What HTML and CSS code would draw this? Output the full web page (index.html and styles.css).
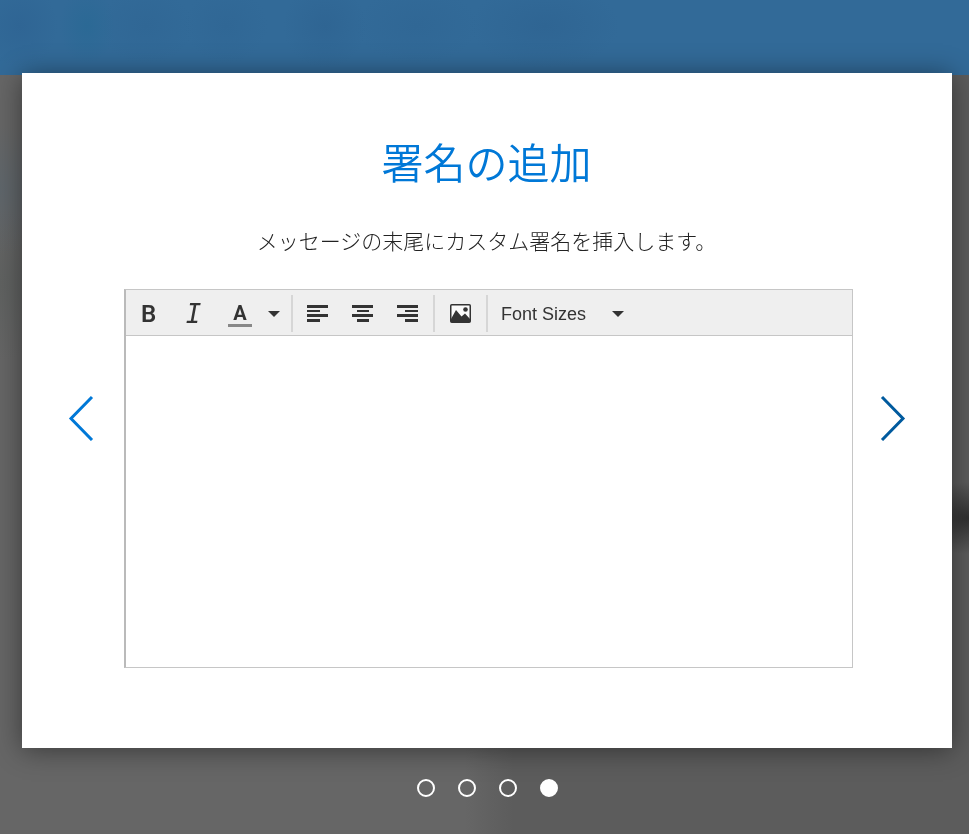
FILE: index.html
```html
<!DOCTYPE html>
<html lang="ja">
<head>
<meta charset="utf-8">
<meta name="viewport" content="width=device-width, initial-scale=1">
<title>署名の追加</title>
<link rel="stylesheet" href="styles.css">
</head>
<body>
<div class="backdrop" aria-hidden="true">
  <div class="backdrop-header"></div>
  <div class="backdrop-body"></div>
</div>
<main class="tour">
  <section class="dialog" role="dialog" aria-labelledby="title">
    <button class="nav nav-prev" type="button" aria-label="前へ">
      <svg width="26" height="46" viewBox="0 0 26 46"><path d="M24 2 3 23.500 24 45"/></svg>
    </button>
    <div class="content">
      <h1 id="title">署名の追加</h1>
      <p class="lead">メッセージの末尾にカスタム署名を挿入します。</p>
      <div class="editor">
        <div class="toolbar" role="toolbar">
          <div class="group">
            <button class="tool bold" type="button" aria-label="太字">B</button>
            <button class="tool italic" type="button" aria-label="斜体">I</button>
            <button class="tool color" type="button" aria-label="文字の色"><span>A</span></button>
            <button class="tool more" type="button" aria-label="色の選択">
              <svg class="caret" width="12" height="6" viewBox="0 0 12 6"><path d="M0 0h12L6 6z"/></svg>
            </button>
          </div>
          <div class="group">
            <button class="tool" type="button" aria-label="左揃え">
              <svg width="21" height="17" viewBox="0 0 21 17"><path d="M0 0h21v3H0zM0 5h13v2H0zM0 9h21v3H0zM0 14h13v3H0z"/></svg>
            </button>
            <button class="tool" type="button" aria-label="中央揃え">
              <svg width="21" height="17" viewBox="0 0 21 17"><path d="M0 0h21v3H0zM5 5h12v2H5zM0 9h21v3H0zM5 14h12v3H5z"/></svg>
            </button>
            <button class="tool" type="button" aria-label="右揃え">
              <svg width="21" height="17" viewBox="0 0 21 17"><path d="M0 0h21v3H0zM8 5h13v2H8zM0 9h21v3H0zM8 14h13v3H8z"/></svg>
            </button>
          </div>
          <div class="group">
            <button class="tool" type="button" aria-label="画像">
              <svg width="21" height="19" viewBox="0 0 21 19"><rect class="frame" x="0.750" y="0.750" width="19.500" height="17.500" rx="1"/><circle cx="15.500" cy="5.500" r="2.300"/><path d="M1 18v-3L6 6l5.500 6.500 3.500-3 5 5.500v3z"/></svg>
            </button>
          </div>
          <label class="size">
            <select aria-label="Font Sizes"><option>Font Sizes</option></select>
            <svg class="caret" width="12" height="6" viewBox="0 0 12 6"><path d="M0 0h12L6 6z"/></svg>
          </label>
        </div>
        <textarea aria-label="署名"></textarea>
      </div>
    </div>
    <button class="nav nav-next" type="button" aria-label="次へ">
      <svg width="26" height="46" viewBox="0 0 26 46"><path d="M2 2 23 23.500 2 45"/></svg>
    </button>
  </section>
  <div class="dots">
    <input type="radio" name="step" aria-label="1">
    <input type="radio" name="step" aria-label="2">
    <input type="radio" name="step" aria-label="3">
    <input type="radio" name="step" aria-label="4" checked>
  </div>
</main>
</body>
</html>
```
FILE: styles.css
```css
* {
  box-sizing: border-box;
}

body {
  margin: 0;
  background: #666;
  color: #333;
  font-family: "Liberation Sans", "Noto Sans CJK JP", sans-serif;
}

button,
select,
textarea,
input {
  margin: 0;
  padding: 0;
  border: 0;
  background: none;
  color: inherit;
  font: inherit;
}

svg {
  display: block;
  fill: currentColor;
}

/* Dimmed page behind the dialog */
.backdrop {
  position: fixed;
  inset: 0;
  z-index: -1;
  display: flex;
  flex-direction: column;
}

.backdrop-header {
  height: 75px;
  background:
    radial-gradient(38px 42px at 20px 26px, #2f6594, transparent),
    radial-gradient(28px 38px at 87px 26px, #2b6995, transparent),
    radial-gradient(48px 38px at 146px 26px, #306795, transparent),
    radial-gradient(42px 38px at 226px 26px, #306795, transparent),
    radial-gradient(42px 42px at 325px 26px, #2f6593, transparent),
    radial-gradient(62px 38px at 417px 26px, #306795, transparent),
    radial-gradient(75px 42px at 545px 26px, #2f6593, transparent),
    #326a98;
}

.backdrop-body {
  flex: 1;
  background:
    radial-gradient(60px 36px at 100% 443px, #303030, transparent),
    radial-gradient(60px 65px at 0 115px, #5f666b, transparent),
    radial-gradient(70px 75px at 0 210px, #606261, transparent),
    linear-gradient(90deg, #666 48%, #5c5c5c 53%);
}

.tour {
  padding: 73px 17px 37px 22px;
}

.dialog {
  display: grid;
  grid-template-columns: 102px 1fr 99px;
  background: #fff;
  box-shadow: 0 2px 26px rgba(0, 0, 0, 0.45);
}

.content {
  padding: 56px 0 80px;
}

h1,
.lead {
  margin: 0;
  padding-right: 4px;
  font-family: "Noto Sans CJK JP", sans-serif;
  text-align: center;
}

h1 {
  color: #0078d7;
  font-size: 42px;
  font-weight: 350;
  line-height: 64px;
}

.lead {
  margin: 32px 0 34px;
  color: #222;
  font-size: 21px;
  font-weight: 300;
  line-height: 30px;
}

.nav {
  display: grid;
  place-items: center;
  padding-top: 14px;
  cursor: pointer;
}

.nav svg {
  fill: none;
  stroke: currentColor;
  stroke-width: 3;
}

.nav-prev {
  padding-left: 16px;
  color: #0078d7;
}

.nav-next {
  padding-right: 20px;
  color: #005a9e;
}

.editor {
  border: 1px solid #c6c6c6;
  border-left: 2px solid #bababa;
}

.toolbar {
  display: flex;
  height: 46px;
  border-bottom: 1px solid #c6c6c6;
  background: #efefef;
}

.group {
  display: flex;
  align-items: center;
  margin: 5px 0 3px;
  padding: 0 3px;
  border-right: 2px solid #d6d6d6;
}

.group:first-child {
  padding: 0 7px 0 0;
}

.group:nth-child(2) {
  padding: 0 3px 0 2px;
}

.tool {
  display: grid;
  place-items: center;
  width: 45px;
  height: 37px;
}

.tool .frame {
  fill: #fafafa;
  stroke: currentColor;
  stroke-width: 1.5px;
}

.bold {
  font-family: Roboto, sans-serif;
  font-size: 24px;
  font-weight: 600;
}

.italic {
  font-family: "DejaVu Sans Mono", monospace;
  font-size: 26px;
  font-style: italic;
}

.color {
  width: 48px;
  font-size: 20px;
  font-weight: 700;
}

.color span {
  width: 24px;
  padding-top: 2px;
  border-bottom: 3px solid #888;
  font-family: Roboto, sans-serif;
  line-height: 22px;
}

.more {
  width: 20px;
}

.size {
  display: grid;
  grid-template-columns: 111px 12px;
  align-items: center;
  padding: 2px 0 0 13px;
}

.size select {
  grid-area: 1 / 1 / 2 / 3;
  height: 37px;
  appearance: none;
  font-size: 18px;
}

.size .caret {
  grid-area: 1 / 2;
  pointer-events: none;
}

textarea {
  display: block;
  width: 100%;
  height: 331px;
  padding: 12px;
  resize: none;
  outline: 0;
}

.dots {
  display: flex;
  justify-content: center;
  gap: 23px;
  padding-top: 31px;
}

.dots input {
  width: 18px;
  height: 18px;
  appearance: none;
  border: 2px solid #fff;
  border-radius: 50%;
}

.dots input:checked {
  background: #fff;
}
```
